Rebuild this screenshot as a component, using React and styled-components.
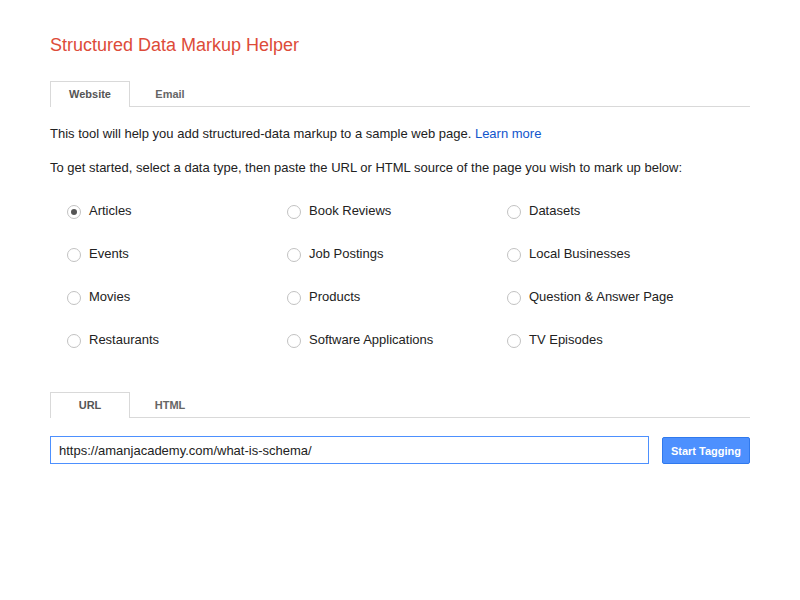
import React, { useState } from 'react';
import styled, { createGlobalStyle } from 'styled-components';

const Global = createGlobalStyle`
  body {
    margin: 0;
    background: #fff;
    font-family: "Liberation Sans", Arial, sans-serif;
    color: #222;
  }
`;

const Page = styled.div`
  width: 700px;
  padding: 33px 50px 0;
`;

const Title = styled.h1`
  margin: 0;
  font-size: 18px;
  font-weight: normal;
  color: #dd4b39;
  line-height: 24px;
`;

const TabBar = styled.div`
  display: flex;
  margin-top: ${p => p.$top}px;
  border-bottom: 1px solid #d9d9d9;
  height: 25px;
`;

const Tab = styled.div`
  width: 80px;
  box-sizing: border-box;
  display: flex;
  align-items: center;
  justify-content: center;
  font-size: 11px;
  font-weight: bold;
  color: ${p => (p.$active ? '#555' : '#666')};
  background: #fff;
  border: 1px solid ${p => (p.$active ? '#d9d9d9' : 'transparent')};
  border-bottom: none;
  margin-bottom: ${p => (p.$active ? '-1px' : '0')};
  height: ${p => (p.$active ? '26px' : '25px')};
  padding-bottom: ${p => (p.$active ? '2px' : '1px')};
`;

const Para = styled.p`
  margin: ${p => p.$top}px 0 0;
  font-size: 13px;
  line-height: 17px;
`;

const Link = styled.a`
  color: #1155cc;
  text-decoration: none;
`;

const Grid = styled.div`
  display: grid;
  grid-template-columns: repeat(3, 220px);
  row-gap: 26px;
  margin-top: 26px;
  padding-left: 17px;
`;

const Option = styled.label`
  display: flex;
  align-items: center;
  gap: 8px;
  font-size: 13px;
  line-height: 17px;
  color: #222;
  cursor: pointer;
`;

const Radio = styled.span`
  width: 14px;
  height: 14px;
  box-sizing: border-box;
  border-radius: 50%;
  border: 1px solid #c2c2c2;
  background: #fff;
  display: flex;
  align-items: center;
  justify-content: center;
  margin-top: 2px;
  &::after {
    content: '';
    width: 6px;
    height: 6px;
    border-radius: 50%;
    background: ${p => (p.$checked ? '#555' : 'transparent')};
  }
`;

const UrlRow = styled.div`
  display: flex;
  gap: 13px;
  margin-top: 18px;
  align-items: flex-start;
`;

const Input = styled.input`
  width: 599px;
  height: 28px;
  box-sizing: border-box;
  border: 1px solid #4d90fe;
  padding: 0 8px;
  font-family: "Liberation Sans", Arial, sans-serif;
  font-size: 13px;
  color: #222;
  outline: none;
`;

const Button = styled.button`
  width: 88px;
  height: 27px;
  margin-top: 1px;
  border: 1px solid #3079ed;
  border-radius: 2px;
  background: #4d90fe;
  color: #fff;
  font-family: "Liberation Sans", Arial, sans-serif;
  font-size: 11px;
  font-weight: bold;
  padding: 0;
`;

const types = [
  'Articles', 'Book Reviews', 'Datasets',
  'Events', 'Job Postings', 'Local Businesses',
  'Movies', 'Products', 'Question & Answer Page',
  'Restaurants', 'Software Applications', 'TV Episodes',
];

export default function App() {
  const [selected, setSelected] = useState('Articles');
  const [url, setUrl] = useState('https://amanjacademy.com/what-is-schema/');

  return (
    <Page>
      <Global />
      <Title>Structured Data Markup Helper</Title>
      <TabBar $top={24}>
        <Tab $active>Website</Tab>
        <Tab>Email</Tab>
      </TabBar>
      <Para $top={18}>
        This tool will help you add structured-data markup to a sample web page. <Link href="#">Learn more</Link>
      </Para>
      <Para $top={17}>
        To get started, select a data type, then paste the URL or HTML source of the page you wish to mark up below:
      </Para>
      <Grid>
        {types.map(t => (
          <Option key={t} onClick={() => setSelected(t)}>
            <Radio $checked={selected === t} />
            {t}
          </Option>
        ))}
      </Grid>
      <TabBar $top={44}>
        <Tab $active>URL</Tab>
        <Tab>HTML</Tab>
      </TabBar>
      <UrlRow>
        <Input value={url} onChange={e => setUrl(e.target.value)} />
        <Button>Start Tagging</Button>
      </UrlRow>
    </Page>
  );
}
